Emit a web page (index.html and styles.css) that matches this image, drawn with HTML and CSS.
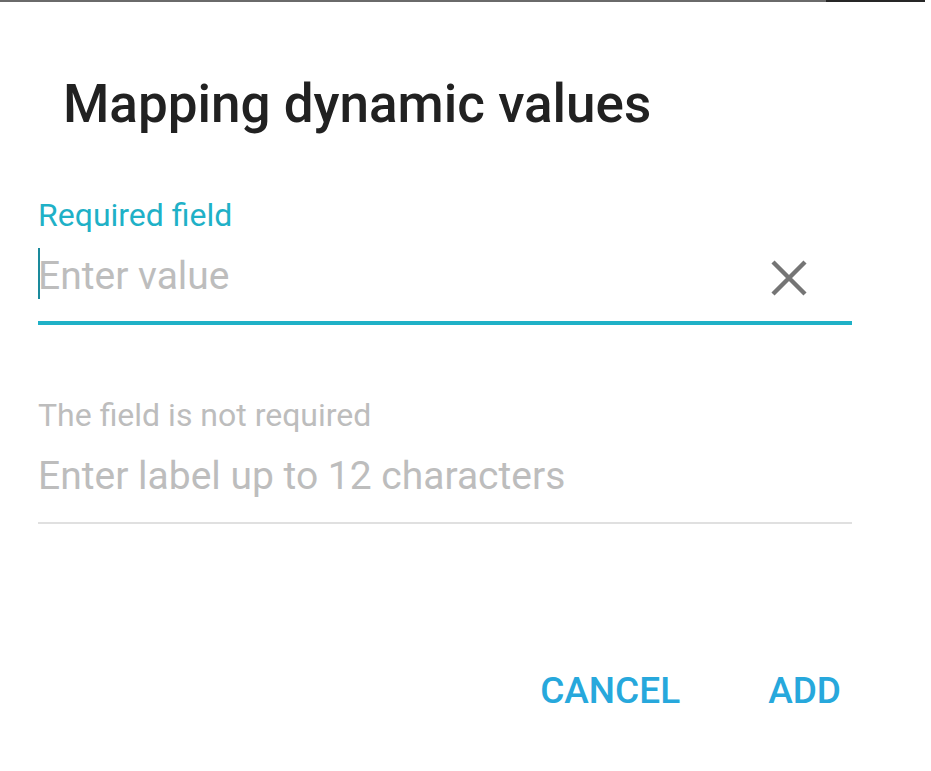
FILE: index.html
```html
<!DOCTYPE html>
<html>
<head>
<meta charset="utf-8">
<link rel="stylesheet" href="styles.css">
</head>
<body>
<div class="topbar"><div class="topbar-left"></div><div class="topbar-right"></div></div>
<div class="dialog">
  <h1 class="title">Mapping dynamic values</h1>
  <div class="field field-active">
    <div class="label label-active">Required field</div>
    <div class="input-row">
      <span class="cursor"></span>
      <span class="placeholder">Enter value</span>
      <svg class="clear" width="36" height="36" viewBox="0 0 36 36"><path d="M2 2 L34 34 M34 2 L2 34" stroke="#757575" stroke-width="4.4" stroke-linecap="butt"/></svg>
    </div>
    <div class="underline underline-active"></div>
  </div>
  <div class="field field-idle">
    <div class="label">The field is not required</div>
    <div class="input-row input-row-idle">
      <span class="placeholder">Enter label up to 12 characters</span>
    </div>
    <div class="underline"></div>
  </div>
  <div class="actions">
    <button class="btn">CANCEL</button>
    <button class="btn">ADD</button>
  </div>
</div>
</body>
</html>
```
FILE: styles.css
```css
html, body {
  margin: 0;
  padding: 0;
  background: #ffffff;
  font-family: Roboto, "Noto Sans", sans-serif;
}
.topbar {
  display: flex;
  height: 2px;
}
.topbar-left { width: 826px; background: #6a6a6a; }
.topbar-right { flex: 1; background: #262626; margin-right: 6px; }
.dialog {
  padding: 0 79px 0 38px;
}
.title {
  margin: 0;
  padding: 70px 0 0 25px;
  font-size: 53px;
  font-weight: 500;
  color: #212121;
  line-height: 64px;
}
.field-active { margin-top: 61px; }
.label {
  font-size: 32px;
  line-height: 36px;
  color: #bdbdbd;
}
.label-active { color: #1fb1c7; }
.input-row {
  display: flex;
  align-items: flex-start;
  box-sizing: border-box;
  height: 88px;
  padding-top: 20px;
  position: relative;
}
.input-row-idle { height: 89px; }
.placeholder {
  font-size: 39px;
  color: #bdbdbd;
  line-height: 46px;
}
.cursor {
  position: absolute;
  left: 0;
  top: 15px;
  width: 2px;
  height: 51px;
  background: #1a8a9c;
}
.clear {
  margin-left: auto;
  margin-right: 45px;
  margin-top: 7px;
}
.underline {
  height: 2px;
  background: #e0e0e0;
}
.underline-active {
  height: 4px;
  background: #1fb1c7;
}
.field-idle { margin-top: 72px; }
.actions {
  display: flex;
  justify-content: flex-end;
  gap: 88px;
  margin-top: 145px;
  padding-right: 11px;
}
.btn {
  border: none;
  background: none;
  padding: 0;
  font-family: Roboto, sans-serif;
  font-weight: 500;
  font-size: 37px;
  color: #27a8dc;
  line-height: 44px;
}
```
